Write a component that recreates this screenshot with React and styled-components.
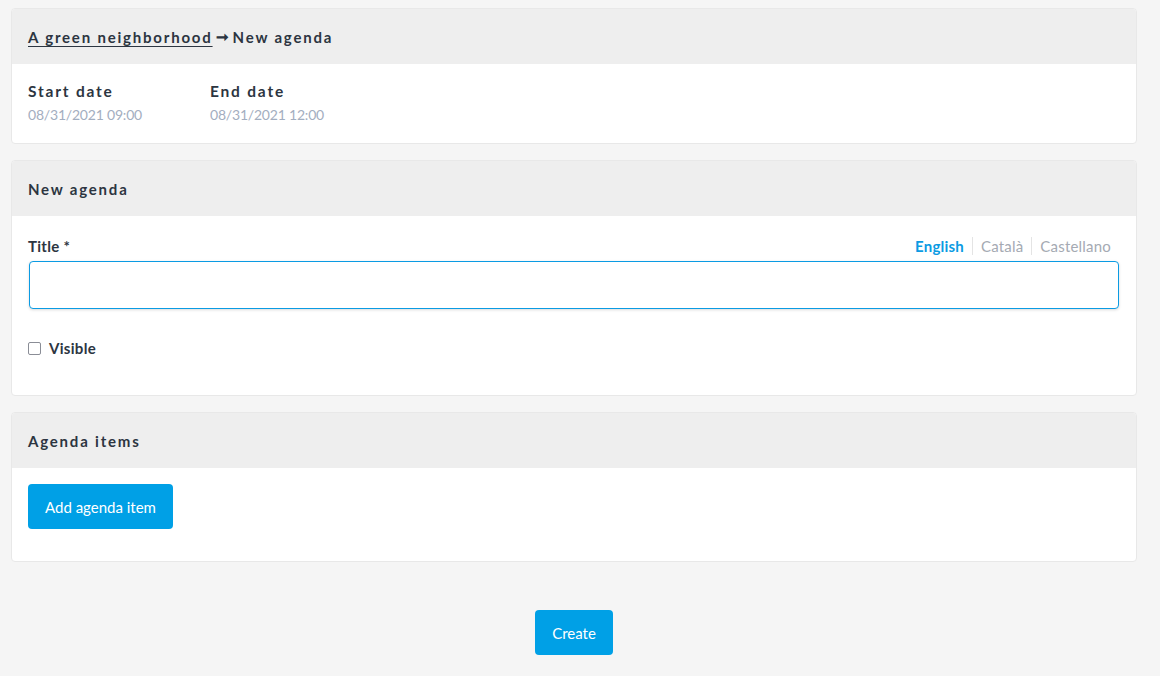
import React from 'react';
import styled, { createGlobalStyle } from 'styled-components';

const GlobalStyle = createGlobalStyle`
  html, body {
    margin: 0;
    padding: 0;
    background: #f5f5f5;
    font-family: "Lato", "Liberation Sans", sans-serif;
    color: #3e4c5c;
  }
  * { box-sizing: border-box; }
`;

function App() {
  return (
    <>
      <GlobalStyle />
      <Page>
        <Card>
          <CardHeader>
            <Crumb href="#">A green neighborhood</Crumb>
            <Arrow>➞</Arrow>
            New agenda
          </CardHeader>
          <CardBody $bottom={18}>
            <DateRow>
              <DateCol>
                <DateLabel>Start date</DateLabel>
                <DateValue>08/31/2021 09:00</DateValue>
              </DateCol>
              <DateCol>
                <DateLabel>End date</DateLabel>
                <DateValue>08/31/2021 12:00</DateValue>
              </DateCol>
            </DateRow>
          </CardBody>
        </Card>

        <Card>
          <CardHeader>New agenda</CardHeader>
          <CardBody $bottom={38}>
            <FieldHead>
              <FieldLabel>Title *</FieldLabel>
              <LangTabs>
                <LangTab $active>English</LangTab>
                <LangTab>Català</LangTab>
                <LangTab>Castellano</LangTab>
              </LangTabs>
            </FieldHead>
            <TextInput type="text" />
            <CheckRow>
              <CheckBox type="checkbox" />
              <FieldLabel>Visible</FieldLabel>
            </CheckRow>
          </CardBody>
        </Card>

        <Card>
          <CardHeader>Agenda items</CardHeader>
          <CardBody $bottom={32}>
            <Button>Add agenda item</Button>
          </CardBody>
        </Card>

        <Actions>
          <Button>Create</Button>
        </Actions>
      </Page>
    </>
  );
}

export default App;

const Page = styled.div`
  padding: 8px 23px 0 11px;
  display: flex;
  flex-direction: column;
  gap: 16px;
`;

const Card = styled.section`
  background: #fff;
  border: 1px solid #e8e8e8;
  border-radius: 4px;
  overflow: hidden;
`;

const CardHeader = styled.div`
  background: #eeeeee;
  height: 55px;
  padding: 0 16px;
  display: flex;
  align-items: center;
  font-size: 15px;
  font-weight: 700;
  letter-spacing: 1.8px;
  color: #2c3541;
`;

const Crumb = styled.a`
  color: #2c3541;
  text-decoration: underline;
  text-underline-offset: 3px;
`;

const Arrow = styled.span`
  margin: 0 4px 0 3px;
  letter-spacing: 0;
  font-size: 15px;
`;

const CardBody = styled.div`
  padding: 16px 16px ${({ $bottom }) => $bottom ?? 12}px;
`;

const DateRow = styled.div`
  display: flex;
  gap: 68px;
`;

const DateCol = styled.div`
  display: flex;
  flex-direction: column;
  width: 114px;
  gap: 3px;
`;

const DateLabel = styled.div`
  font-size: 15.5px;
  line-height: 22px;
  font-weight: 700;
  letter-spacing: 1.8px;
  color: #2c3541;
  white-space: nowrap;
`;

const DateValue = styled.div`
  font-size: 14px;
  line-height: 20px;
  letter-spacing: -0.2px;
  color: #a3aec0;
  white-space: nowrap;
`;

const FieldHead = styled.div`
  display: flex;
  justify-content: space-between;
  align-items: center;
  padding-top: 5px;
  margin-bottom: 6px;
`;

const FieldLabel = styled.label`
  font-size: 15px;
  font-weight: 700;
  letter-spacing: 0.3px;
  color: #2c3541;
`;

const LangTabs = styled.div`
  display: flex;
  padding-right: 9px;
`;

const LangTab = styled.span`
  font-size: 15px;
  padding: 0 8px;
  color: ${({ $active }) => ($active ? '#0b9be3' : '#a5aab3')};
  font-weight: ${({ $active }) => ($active ? 700 : 400)};
  letter-spacing: 0.2px;
  border-left: 1px solid #e4e4e4;
  &:first-child { border-left: none; }
  &:last-child { padding-right: 0; }
`;

const TextInput = styled.input`
  display: block;
  width: calc(100% - 2px);
  margin-left: 1px;
  height: 48px;
  border: 1px solid #0b9be3;
  border-radius: 4px;
  box-shadow: 0 1px 3px rgba(0, 0, 0, 0.15);
  outline: none;
  font-size: 15px;
  padding: 0 12px;
  font-family: inherit;
`;

const CheckRow = styled.div`
  display: flex;
  align-items: center;
  gap: 8px;
  margin-top: 30px;
`;

const CheckBox = styled.input`
  appearance: none;
  margin: 0;
  width: 13px;
  height: 13px;
  border: 1.5px solid #8a8d96;
  border-radius: 2px;
  background: #fff;
`;

const Button = styled.button`
  background: #00a0e6;
  color: #fff;
  border: none;
  border-radius: 4px;
  height: 45px;
  padding: 0 17px;
  font-size: 15px;
  font-family: inherit;
  cursor: pointer;
`;

const Actions = styled.div`
  display: flex;
  justify-content: center;
  padding-top: 32px;
`;
